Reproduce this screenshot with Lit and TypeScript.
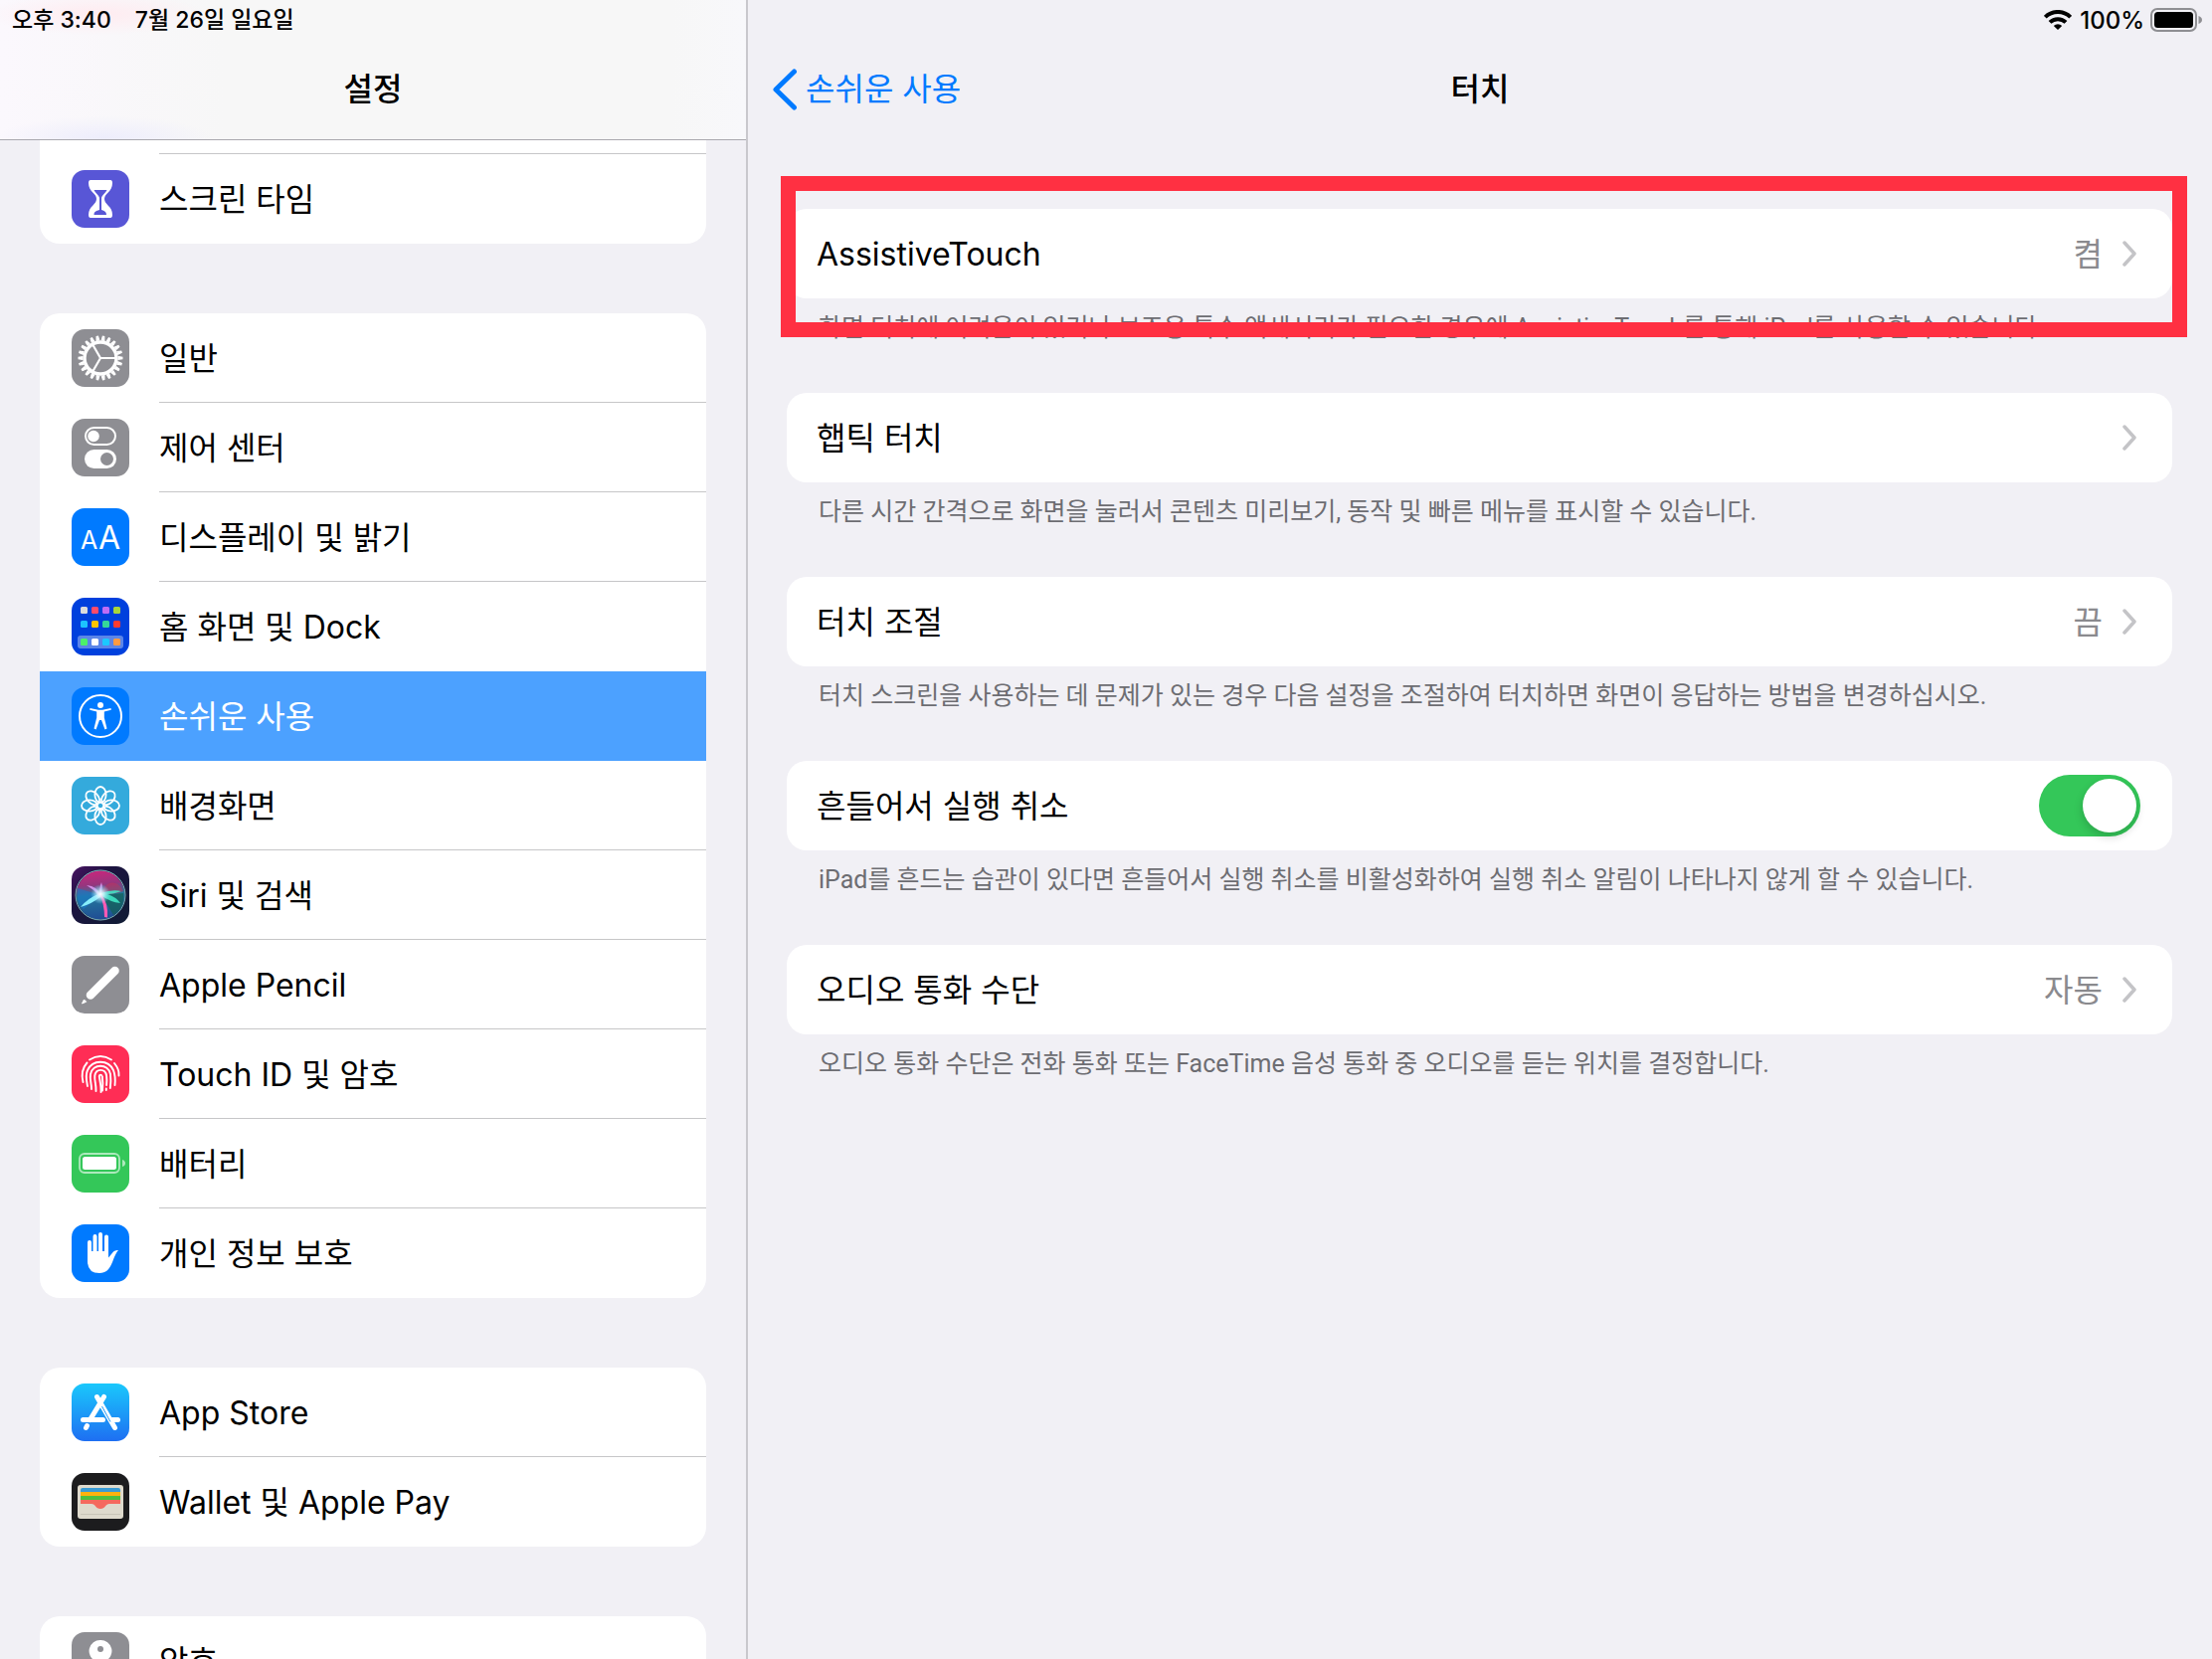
import { LitElement, html, css, svg, nothing, type TemplateResult, type SVGTemplateResult } from "lit";
import { customElement, property } from "lit/decorators.js";
import { classMap } from "lit/directives/class-map.js";

const range = (n: number) => Array.from({ length: n }, (_, i) => i);

const homeDots: [number, number, string][] = [
  [9, 9, "#dcdcdc"], [20, 9, "#ff4b6b"], [31, 9, "#bf6cf5"], [42, 9, "#a8d63a"],
  [9, 23, "#1cc4ff"], [20, 23, "#ffc400"], [31, 23, "#35d69a"], [42, 23, "#ff3b30"],
  [9, 41, "#4cf06a"], [20, 41, "#ffffff"], [31, 41, "#1cc8ff"], [42, 41, "#ff9a42"],
];

/* Glyphs are drawn on a 58 x 58 tile. */
const glyphs: Record<string, SVGTemplateResult> = {
  hourglass: svg`
    <rect width="58" height="58" fill="#5856d6"/>
    <path d="M19 10h20q2 0 2 3c0 9-8 10-8 16s8 7 8 16q0 3-2 3H19q-2 0-2-3c0-9 8-10 8-16s-8-7-8-16q0-3 2-3z" fill="#fff"/>
    <path d="M22.500 20h13c-1 3-5 5-5.500 8v12c3 1 5 2 5 5H22.500c0-3 2-4 5.500-5V28c-.5-3-4.500-5-5.500-8z" fill="#5856d6"/>`,
  gear: svg`
    <rect width="58" height="58" fill="#8e8e93"/>
    ${range(22).map((i) => svg`<path d="M27.600 11l.6-4h1.600l.6 4z" fill="#fff" stroke="#fff" stroke-width="1" transform="rotate(${(i * 360) / 22 + 8} 29 29)"/>`)}
    <circle cx="29" cy="29" r="16" fill="none" stroke="#fff" stroke-width="3.400"/>
    <path d="M29 29h15M29 29l-7.500-13M29 29l-7.500 13" stroke="#fff" stroke-width="2.200"/>`,
  toggles: svg`
    <rect width="58" height="58" fill="#8e8e93"/>
    <rect x="14" y="9" width="30" height="17" rx="8.500" fill="none" stroke="#fff" stroke-width="2"/>
    <circle cx="22" cy="17.500" r="5.800" fill="#fff"/>
    <rect x="13" y="31" width="32" height="19" rx="9.500" fill="#fff"/>
    <circle cx="35.500" cy="40.500" r="6.500" fill="#8e8e93"/>`,
  text: svg`
    <rect width="58" height="58" fill="#007aff"/>
    <text x="9" y="41" font-size="25" font-family="Inter, sans-serif" fill="#fff">A</text>
    <text x="27" y="41" font-size="32" font-family="Inter, sans-serif" fill="#fff">A</text>`,
  home: svg`
    <rect width="58" height="58" fill="#0040dd"/>
    <rect x="6" y="38" width="46" height="13" rx="3" fill="#5b85e8"/>
    ${homeDots.map(([x, y, c]) => svg`<rect x=${x} y=${y} width="7" height="7" rx="1.500" fill=${c}/>`)}`,
  access: svg`
    <rect width="58" height="58" fill="#007aff"/>
    <circle cx="29" cy="29" r="21" fill="none" stroke="#fff" stroke-width="2"/>
    <circle cx="29" cy="18" r="3" fill="#fff"/>
    <path d="M18.500 21l8.500 1.800h4l8.500-1.800.3 1.800-7 1.800v6l2.700 11-2 .8L30 33h-2l-3.500 9.400-2-.8 2.700-11v-6l-7-1.800z" fill="#fff"/>`,
  flower: svg`
    <rect width="58" height="58" fill="#34aadc"/>
    <g fill="none" stroke="#fff" stroke-width="1.800">
      ${range(8).map((i) => svg`<ellipse cx="29" cy="18" rx="5.600" ry="8" transform="rotate(${i * 45} 29 29)"/>`)}
    </g>`,
  siri: svg`
    <defs>
      <linearGradient id="sb" x1="0" y1="0" x2="1" y2="1"><stop offset="0" stop-color="#4a1263"/><stop offset=".35" stop-color="#1c1440"/><stop offset="1" stop-color="#101c34"/></linearGradient>
      <linearGradient id="so" x1=".4" y1="0" x2=".5" y2="1"><stop offset="0" stop-color="#c8267c"/><stop offset=".28" stop-color="#96367e"/><stop offset=".5" stop-color="#24789c"/><stop offset="1" stop-color="#1f4c94"/></linearGradient>
      <radialGradient id="sg"><stop offset="0" stop-color="#fff"/><stop offset=".35" stop-color="#d8f4ff" stop-opacity=".8"/><stop offset="1" stop-color="#7fdcff" stop-opacity="0"/></radialGradient>
    </defs>
    <rect width="58" height="58" fill="url(#sb)"/>
    <circle cx="29" cy="29" r="24.500" fill="url(#so)"/>
    <path d="M29 29C34 12 47 14 52 25Q44 28 29 29z" fill="#c83058" opacity=".5"/>
    <path d="M29 29L6 22Q4 36 12 43z" fill="#1878c8" opacity=".6"/>
    <path d="M30 29L52 27Q54 42 42 49z" fill="#12604e" opacity=".65"/>
    <path d="M29 27q12-4 21-2-8 3-14 3 9 3 13 9-10-1-20-8z" fill="#40e6c4" opacity=".9"/>
    <path d="M29 27q-13 5-20 14 11-3 21-11z" fill="#8df4ff" opacity=".95"/>
    <path d="M28 28q5 10 5 23l3 .5q1-14-6-23.500z" fill="#ff5ab4"/>
    <path d="M29 29Q26 20 15 19q7 4 13 11zM29 29q3-7 1-13-3 7-1 13z" fill="#e8a0ff" opacity=".8"/>
    <circle cx="29" cy="28" r="10" fill="url(#sg)"/>
    <circle cx="29" cy="29" r="25" fill="none" stroke="#7db4b8" stroke-width="1"/>`,
  pencil: svg`
    <rect width="58" height="58" fill="#8e8e93"/>
    <path d="M19 39.500L43.500 15" stroke="#fff" stroke-width="8.500" stroke-linecap="round"/>
    <path d="M13.500 40.500l5 5-3 1-3-3z" fill="#8e8e93"/>
    <path d="M10.500 48l2-4 2.200 2.200z" fill="#fff" stroke="#fff"/>`,
  finger: svg`
    <rect width="58" height="58" fill="#ff2d55"/>
    <g fill="none" stroke="#fff" stroke-width="1.900" stroke-linecap="round">
      <path d="M18 14.500q11-7 22 0M11.500 37c-2-8 0-15 4-19.500M43 18c4 5 5 8 4.500 12.500"/>
      <path d="M16 41c-1-5-2.500-11 0-16 5-11 21-11 26 0 2 5 2 10 1.500 15"/>
      <path d="M20 44c0-6-2-10-1-15 2-11 18-11 20 0 .6 5 .4 10-.2 14"/>
      <path d="M24.500 46c.4-6-1.800-11-1.200-15.500 1.200-7.500 10.600-7.500 11.800 0 .5 4 .2 7 0 9.500M34.800 43.500v1.500"/>
      <path d="M29.500 47c.4-6-1-11-1.700-15.500 0-2.500 2.700-2.500 3 0 .8 5 .7 9 .2 14"/>
    </g>`,
  battery: svg`
    <rect width="58" height="58" fill="#34c759"/>
    <rect x="8" y="19" width="40" height="19" rx="5" fill="none" stroke="#fff" stroke-opacity=".6" stroke-width="1.800"/>
    <rect x="11" y="22" width="34" height="13" rx="2.500" fill="#fff"/>
    <path d="M51 25q3 1 3 3.500T51 32z" fill="#fff" opacity=".6"/>`,
  hand: svg`
    <rect width="58" height="58" fill="#007aff"/>
    <g stroke="#fff" stroke-width="4" stroke-linecap="round"><path d="M18 18v18M23.500 12v20M29 10v20M35 12.500V32"/></g>
    <path d="M16 27h21v6.500l5-6q2-2 5-1.500-2 2-4.500 8C39 44 36 49 28 49q-12 0-12-12z" fill="#fff"/>`,
  store: svg`
    <defs><linearGradient id="as" x1="0" y1="0" x2="0" y2="1"><stop offset="0" stop-color="#1ac8fc"/><stop offset="1" stop-color="#1e6ff2"/></linearGradient></defs>
    <rect width="58" height="58" fill="url(#as)"/>
    <g stroke="#fff" stroke-width="5" stroke-linecap="round" fill="none">
      <path d="M32.500 13.500L18.500 36.500M15.500 42.500L14.500 44.500M11.500 36.500h20M39.500 36.500h7M25.500 13.500L43.500 44.500"/>
    </g>
    <path d="M30.500 23L39 38.500" stroke="#1d97f8" stroke-width="1"/>`,
  wallet: svg`
    <rect width="58" height="58" fill="#1c1c1e"/>
    <rect x="6" y="12" width="46" height="34" rx="3" fill="#dedacd"/>
    <path d="M9 19v-2q0-2 2-2h36q2 0 2 2v2z" fill="#3a9bd4"/>
    <path d="M9 19h40v4H9z" fill="#ffb20e"/><path d="M9 23h40v4H9z" fill="#4fbf3e"/>
    <path d="M9 27h40v4H38c-4 0-4 5-9 5s-5-5-9-5H9z" fill="#f5695e"/>
    <path d="M9 41.500h40" stroke="#c9c5b8"/>`,
  key: svg`
    <rect width="58" height="58" fill="#8e8e93"/>
    <path d="M29 8a11 11 0 0 1 5 21v20l-5 4-5-4V29a11 11 0 0 1 5-21z" fill="#fff"/>
    <circle cx="29" cy="17" r="3" fill="#8e8e93"/>`,
};

interface NavItem { icon: string; label: string; selected?: boolean; }

const navGroups: NavItem[][] = [
  [{ icon: "hourglass", label: "스크린 타임" }],
  [
    { icon: "gear", label: "일반" },
    { icon: "toggles", label: "제어 센터" },
    { icon: "text", label: "디스플레이 및 밝기" },
    { icon: "home", label: "홈 화면 및 Dock" },
    { icon: "access", label: "손쉬운 사용", selected: true },
    { icon: "flower", label: "배경화면" },
    { icon: "siri", label: "Siri 및 검색" },
    { icon: "pencil", label: "Apple Pencil" },
    { icon: "finger", label: "Touch ID 및 암호" },
    { icon: "battery", label: "배터리" },
    { icon: "hand", label: "개인 정보 보호" },
  ],
  [
    { icon: "store", label: "App Store" },
    { icon: "wallet", label: "Wallet 및 Apple Pay" },
  ],
  [{ icon: "key", label: "암호" }],
];

interface Option { id: string; label: string; value?: string; toggle?: boolean; note: string; marked?: boolean; }

const options: Option[] = [
  { id: "assistive", label: "AssistiveTouch", value: "켬", marked: true, note: "화면 터치에 어려움이 있거나 보조용 특수 액세서리가 필요한 경우에 AssistiveTouch를 통해 iPad를 사용할 수 있습니다." },
  { id: "haptic", label: "햅틱 터치", note: "다른 시간 간격으로 화면을 눌러서 콘텐츠 미리보기, 동작 및 빠른 메뉴를 표시할 수 있습니다." },
  { id: "adjust", label: "터치 조절", value: "끔", note: "터치 스크린을 사용하는 데 문제가 있는 경우 다음 설정을 조절하여 터치하면 화면이 응답하는 방법을 변경하십시오." },
  { id: "shake", label: "흔들어서 실행 취소", toggle: true, note: "iPad를 흔드는 습관이 있다면 흔들어서 실행 취소를 비활성화하여 실행 취소 알림이 나타나지 않게 할 수 있습니다." },
  { id: "audio", label: "오디오 통화 수단", value: "자동", note: "오디오 통화 수단은 전화 통화 또는 FaceTime 음성 통화 중 오디오를 듣는 위치를 결정합니다." },
];

@customElement("settings-sidebar")
export class SettingsSidebar extends LitElement {
  static styles = css`
    :host { display: flex; flex-direction: column; min-height: 0; overflow: hidden; border-right: 2px solid #c9c8cd; }
    .head {
      flex: none; display: flex; flex-direction: column; height: 140px; border-bottom: 1px solid #a9a8ae;
      background:
        radial-gradient(ellipse at 13% 10%, #ffebf0 0, transparent 110px),
        radial-gradient(ellipse at 14% 100%, #ededfc 0, transparent 110px),
        linear-gradient(90deg, #fbf8fd 0, #f7f7f7 30%, #f7f7f7 90%, #f8f8fb 100%);
    }
    .status { display: flex; gap: 24px; padding: 0 12px; font-size: 23px; line-height: 40px; font-weight: 500; }
    h1 { margin: 0; text-align: center; font-size: 32px; line-height: 100px; font-weight: 500; }
    nav { flex: 1; min-height: 0; overflow: hidden; display: flex; flex-direction: column; gap: 70px; padding: 0 40px; }
    ul { flex: none; list-style: none; margin: 0; padding: 0; background: #fff; border-radius: 20px; overflow: hidden; }
    .scrolled { border-radius: 0 0 20px 20px; padding-top: 13px; }
    .row { display: flex; align-items: stretch; gap: 30px; height: 90px; padding-left: 32px; color: #000; text-decoration: none; }
    .tile { width: 58px; height: 58px; border-radius: 13px; align-self: center; display: block; flex: none; }
    .label { flex: 1; box-sizing: border-box; height: 90px; padding-top: 2px; border-bottom: 1px solid #c6c6c8; font-size: 32px; line-height: 88px; white-space: nowrap; }
    .plain .label { border-bottom-color: transparent; }
    .lead { border-top: 1px solid #c6c6c8; margin-left: 120px; }
    .selected .row { background: #4ca1ff; color: #fff; }
  `;

  render() {
    return html`
      <header class="head">
        <div class="status"><span>오후 3:40</span><span>7월 26일 일요일</span></div>
        <h1>설정</h1>
      </header>
      <nav aria-label="설정">${navGroups.map((group, g) => this.renderGroup(group, g === 0))}</nav>
    `;
  }

  private renderGroup(group: NavItem[], scrolled: boolean): TemplateResult {
    return html`
      <ul class=${classMap({ scrolled })}>
        ${scrolled ? html`<li class="lead" role="presentation"></li>` : nothing}
        ${group.map((item, i) => {
          const plain = i === group.length - 1 || !!item.selected || !!group[i + 1]?.selected;
          return html`
            <li class=${classMap({ plain, selected: !!item.selected })}>
              <a class="row" href="#${item.icon}" aria-current=${item.selected ? "page" : nothing}>
                <svg class="tile" viewBox="0 0 58 58" aria-hidden="true">${glyphs[item.icon]}</svg>
                <span class="label">${item.label}</span>
              </a>
            </li>`;
        })}
      </ul>`;
  }
}

@customElement("settings-option")
export class SettingsOption extends LitElement {
  @property({ attribute: false }) option!: Option;

  static styles = css`
    :host { display: block; }
    .card { position: relative; }
    .row {
      box-sizing: border-box; display: flex; align-items: center; width: 100%; height: 90px; padding: 0 36px 0 30px;
      border: 0; border-radius: 20px; background: #fff; color: #000; font: inherit; font-size: 32px; line-height: 88px; text-align: left;
    }
    .switchrow { padding-right: 32px; }
    .label { flex: 1; padding-top: 2px; }
    .value { padding-top: 2px; color: #8a8a8e; margin-right: 20px; }
    .chevron { width: 14px; height: 26px; display: block; }
    .switch {
      appearance: none; flex: none; display: flex; align-items: center; justify-content: flex-end; margin: 0; padding: 4px; box-sizing: border-box;
      width: 102px; height: 62px; border-radius: 31px; background: #34c759;
    }
    .switch:not(:checked) { justify-content: flex-start; background: #e9e9eb; }
    .switch::before { content: ""; width: 54px; height: 54px; border-radius: 50%; background: #fff; box-shadow: 0 4px 10px rgba(0, 0, 0, 0.18); }
    .note {
      margin: 0; padding: 0 32px; height: 95px; box-sizing: border-box; color: #6d6d72; white-space: nowrap;
      font-family: Roboto, "Noto Sans CJK KR", sans-serif; font-size: 25px; line-height: 60px;
    }
    .mark { position: absolute; inset: -33px -15px -39px -6px; border: 15px solid #ff3042; pointer-events: none; }
  `;

  render() {
    const { id, label, value, toggle, note, marked } = this.option;
    return html`
      <div class="card">
        ${toggle
          ? html`<div class="row switchrow">
              <label class="label" for=${id}>${label}</label>
              <input class="switch" id=${id} type="checkbox" role="switch" checked aria-describedby="note" />
            </div>`
          : html`<button class="row" type="button" aria-describedby="note">
              <span class="label">${label}</span>
              ${value ? html`<span class="value">${value}</span>` : nothing}
              <svg class="chevron" viewBox="0 0 14 26" aria-hidden="true"><path d="M2 2l10 11L2 24" fill="none" stroke="#c4c4c7" stroke-width="3.500" stroke-linecap="round" stroke-linejoin="round"/></svg>
            </button>`}
        ${marked ? html`<div class="mark"></div>` : nothing}
      </div>
      <p class="note" id="note">${note}</p>
    `;
  }
}

@customElement("app-root")
export class AppRoot extends LitElement {
  static styles = css`
    :host {
      display: grid; grid-template-columns: minmax(0, 752fr) minmax(0, 1472fr); height: 100vh; overflow: hidden; background: #f1f0f5; color: #000;
      font-family: Inter, "Noto Sans CJK KR", sans-serif;
    }
    main { display: flex; flex-direction: column; min-width: 0; }
    .status { display: flex; align-items: center; justify-content: flex-end; height: 40px; padding-right: 10px; font-size: 24px; font-weight: 500; }
    .wifi { width: 28px; height: 20px; margin-right: 8px; }
    .cell { width: 52px; height: 24px; margin-left: 6px; }
    .bar { display: grid; grid-template-columns: 1fr auto 1fr; align-items: center; height: 100px; padding: 0 24px; font-size: 32px; line-height: 100px; }
    .back { display: flex; align-items: center; gap: 8px; justify-self: start; color: #007aff; text-decoration: none; }
    .arrow { width: 26px; height: 42px; }
    h2 { margin: 0; font-size: 32px; font-weight: 500; }
    .list { padding: 70px 40px 0 39px; }
  `;

  render() {
    return html`
      <settings-sidebar></settings-sidebar>
      <main>
        <div class="status">
          <svg class="wifi" viewBox="0 0 28 20" aria-hidden="true">
            <g fill="none" stroke="#000" stroke-width="4"><path d="M1.300 7.200a18 18 0 0 1 25.400 0M6 12.400a11.500 11.500 0 0 1 16 0"/></g>
            <path d="M9.800 16a6 6 0 0 1 8.400 0L14 20z"/>
          </svg>
          <span>100%</span>
          <svg class="cell" viewBox="0 0 52 24" aria-hidden="true">
            <rect x="1" y="1" width="45" height="22" rx="6" fill="none" stroke="#8f8f93" stroke-width="2"/>
            <rect x="4" y="4" width="39" height="16" rx="3.500"/>
            <path d="M48.500 8q3.500 1.500 3.500 4t-3.500 4z" fill="#8f8f93"/>
          </svg>
        </div>
        <header class="bar">
          <a class="back" href="#access">
            <svg class="arrow" viewBox="0 0 26 42" aria-hidden="true"><path d="M22.500 3L4 21l18.500 18" fill="none" stroke="#007aff" stroke-width="5" stroke-linecap="round" stroke-linejoin="round"/></svg>
            <span>손쉬운 사용</span>
          </a>
          <h2>터치</h2>
        </header>
        <div class="list">${options.map((option) => html`<settings-option .option=${option}></settings-option>`)}</div>
      </main>
    `;
  }
}
